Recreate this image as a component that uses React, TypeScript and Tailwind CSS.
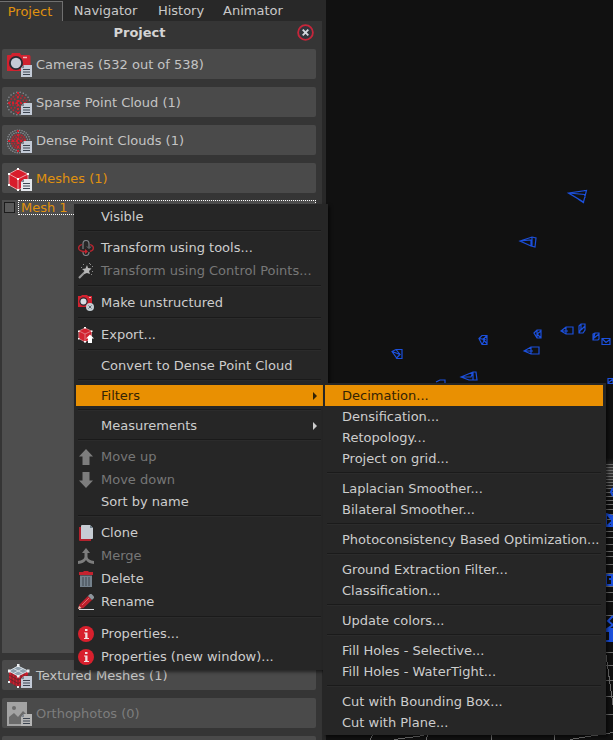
import type { ReactNode } from "react";
import clsx from "clsx";

type MenuEntry = { label: string; icon?: ReactNode; disabled?: boolean; submenu?: MenuEntry[][]; open?: boolean; active?: boolean };

/* Little text page shown over the corner of the project icons */
function PageBadge({ light = "#c3cad6" }: { light?: string }) {
  return (
    <g>
      <path d="M17 12h8v12H14v-9z" fill={light} />
      <path d="M14 15l3-3v3z" fill="#7d8591" />
      <path d="M16 16.500h7M16 19h7M16 21.500h7" stroke="#3c4450" />
    </g>
  );
}

function RowIcon({ children, light }: { children: ReactNode; light?: string }) {
  return (
    <svg viewBox="0 0 25 25" className="size-[25px] shrink-0" aria-hidden="true">
      {children}
      <PageBadge light={light} />
    </svg>
  );
}

function CameraIcon() {
  return (
    <RowIcon>
      <path d="M0 2.500Q0 2 1 2h3l1-2h8l1 2h8q1.500 0 1.500 1.500V18H0z" fill="#d0222f" />
      <path d="M16 4.500h4" stroke="#f0b9bd" strokeWidth="1.500" />
      <circle cx="9" cy="10" r="7" fill="#262a33" />
      <circle cx="9" cy="10" r="5.200" fill="#c3cad6" />
    </RowIcon>
  );
}

function CloudIcon({ dense }: { dense?: boolean }) {
  const step = dense ? 2.4 : 3;
  const dots: ReactNode[] = [];
  for (let r = step; r <= 12; r += step) {
    const count = Math.round((r * 6.3) / (dense ? 2.5 : 3.4));
    for (let i = 0; i < count; i++) {
      const a = (i / count) * Math.PI * 2;
      const outer = r > 9.5;
      dots.push(
        <circle
          key={`${r}-${i}`}
          cx={11.5 + r * Math.cos(a) * 0.95}
          cy={12.5 + r * Math.sin(a) * 0.95}
          r={outer ? 0.75 : 1}
          fill={outer ? "#8f939a" : "#b32833"}
        />
      );
    }
  }
  return (
    <RowIcon>
      {dots}
      <path d="M11 1v22M1 12h20" stroke="#d4202f" strokeWidth="2" strokeDasharray="2 2" />
    </RowIcon>
  );
}

function CubeIcon() {
  return (
    <RowIcon light="#e4e7ec">
      <path d="M11 2l10 5v11l-10 5-9-5V7z" fill="#d81c2c" />
      <path d="M11 2l10 5v11l-10 5-9-5V7zM2 7l9 5 10-5M11 12v11" fill="none" stroke="#e9a3a8" />
      <path d="M10 1h2v2h-2zM1 6h2v2H1zM20 6h2v2h-2zM10 11h2v2h-2zM1 17h2v2H1zM10 22h2v2h-2z" fill="#fff" />
    </RowIcon>
  );
}

function TexturedIcon() {
  return (
    <RowIcon>
      <path d="M2 7l9 5 10-5v11l-10 5-9-5z" fill="#c91f2e" />
      <path d="M11 2l10 5-10 5-9-5z" fill="#8fa0ad" />
      <path d="M5 9v11M8 11v11M11 12v11M14 11v11M17 9v11M2 11l9 5 10-5M2 14.500l9 5 10-5" fill="none" stroke="#5d262b" strokeWidth=".8" />
      <path d="M6.500 4.500l9.500 5M16 4.500l-9.500 5M11 2l10 5-10 5-9-5z" fill="none" stroke="#d7dee4" />
      <path d="M10 0h2.500v3H10zM1 5.500h2.500v3H1zM20 5.500h2.500v3H20zM10 11h2.500v2.500H10zM1 17h2v2H1zM10 22h2v2h-2z" fill="#eceff2" />
    </RowIcon>
  );
}

function PhotoIcon() {
  return (
    <RowIcon light="#b5b5b5">
      <path d="M0 0h20v24H0z" fill="#a3a3a3" />
      <path d="M2 15l5-4 4 4 5-6 4 4v9H2z" fill="#6b6b6b" />
      <circle cx="7" cy="6" r="2" fill="#6b6b6b" />
    </RowIcon>
  );
}

function DemIcon() {
  return (
    <RowIcon light="#b5b5b5">
      <path d="M6 2l4-2h6l4 2v12H6z" fill="#8c8c8c" />
    </RowIcon>
  );
}

function MenuIcon({ children }: { children: ReactNode }) {
  return (
    <svg viewBox="0 0 16 16" className="size-4" aria-hidden="true">
      {children}
    </svg>
  );
}

const rotateIcon = (
  <MenuIcon>
    <path d="M5 9V4q0-3.500 3-3.500T11 4v3.500M5 12q0 3.500 3 3.500t3-3.500" fill="none" stroke="#7d8085" strokeWidth="1.200" />
    <path d="M9 6.500l2 2 2-2" fill="none" stroke="#7d8085" />
    <path d="M4 4.500Q.6 5.500.6 8T5 11.500h4M12 4.500Q15.400 5.500 15.400 8T12 11.300" fill="none" stroke="#b5252f" strokeWidth="1.300" />
    <path d="M7 9l3 2.500L7 14z" fill="#c9232f" />
  </MenuIcon>
);

const wandIcon = (
  <MenuIcon>
    <path d="M1 15l7-7" stroke="#9a9a9a" strokeWidth="2.200" />
    <path d="M9 2l1 3 3.500.5-2.500 2.500 1 3-3-1-3 1 .5-3L4 6l3.500-.5z" fill="#b8b8b8" />
    <path d="M5 1h1v1H5zM12 1h1v1h-1zM14 3h1v1h-1zM14 8h1v1h-1zM11 0h1v1h-1zM3 4h1v1H3zM13 11h1v1h-1z" fill="#8b8b8b" />
  </MenuIcon>
);

const unstructuredIcon = (
  <MenuIcon>
    <path d="M0 1h3l1-1h5l1 1h4v11H0z" fill="#d2222f" />
    <path d="M11 2.500h2" stroke="#efb3b8" />
    <circle cx="5.500" cy="6.500" r="4.200" fill="#282b32" />
    <circle cx="5.500" cy="6.500" r="3" fill="#d7dbe1" />
    <circle cx="12" cy="12" r="4" fill="#c3cdd2" />
    <path d="M10.500 10.500l3 3M13.500 10.500l-3 3" stroke="#59666e" />
  </MenuIcon>
);

const exportIcon = (
  <MenuIcon>
    <path d="M7 1l6.500 3v7.500L7 15 .8 11.500V4z" fill="#d2222f" />
    <path d="M7 1l6.500 3v7.500L7 15 .8 11.500V4zM1 4l6 3 6.500-3M7 7v8" fill="none" stroke="#e69ba0" strokeWidth=".7" />
    <path d="M6 0h2v1.500H6zM0 3.500h1.500V5H0zM0 11h1.500v1.500H0zM6 14h2v1.500H6zM13 3.500h1.500V5H13z" fill="#fff" />
    <path d="M12 7.500l4 4h-2V16h-4v-4.500H8z" fill="#fff" />
  </MenuIcon>
);

const upIcon = (
  <MenuIcon>
    <path d="M8 0l7 7.500h-3.500V16h-7V7.500H1z" fill="#7d7d7d" />
  </MenuIcon>
);

const downIcon = (
  <MenuIcon>
    <path d="M8 16l7-7.500h-3.500V0h-7v8.500H1z" fill="#7d7d7d" />
  </MenuIcon>
);

const cloneIcon = (
  <MenuIcon>
    <path d="M1 2h12v14H2q-1 0-1-1z" fill="#b2222d" />
    <path d="M3 1q0-1 1-1h8l3 3v10q0 1-1 1H3z" fill="#c6ccd3" />
    <path d="M12 0l3 3h-3z" fill="#6e7f8a" />
  </MenuIcon>
);

const mergeIcon = (
  <MenuIcon>
    <path d="M8 0l4 5H9.500v4q.5 3 6.500 4v3q-6-.5-8-4-2 3.500-8 4v-3q6-1 6.500-4V5H4z" fill="#7d7d7d" />
  </MenuIcon>
);

const trashIcon = (
  <MenuIcon>
    <path d="M5.500 0h5v1H15v3H1V1h4.500z" fill="#c3232f" />
    <path d="M2 4.500h12V16H2z" fill="#74818c" />
    <path d="M5 6v9M8 6v9M11 6v9" stroke="#3d454c" />
  </MenuIcon>
);

const pencilIcon = (
  <MenuIcon>
    <path d="M1 15.500h15" stroke="#d4d8dc" />
    <path d="M1.500 10.500L10 2l4 4-8.500 8L0 15z" fill="#bd202c" />
    <path d="M10 2l2-2h1.500L16 2.500V4l-2 2z" fill="#8d959c" />
    <path d="M4 11l7-7" stroke="#e26a72" />
    <path d="M1 12l2.500 2L0 15z" fill="#e0c8b8" />
  </MenuIcon>
);

const infoIcon = (
  <MenuIcon>
    <circle cx="8" cy="8" r="8" fill="#d8202d" />
    <path d="M7 3h2.500v2H7zM6 6.500h3.500V12H11v1H6v-1h1.200V7.500H6z" fill="#f1dfe0" />
  </MenuIcon>
);

const filters: MenuEntry[][] = [
  [{ label: "Decimation...", active: true }, { label: "Densification..." }, { label: "Retopology..." }, { label: "Project on grid..." }],
  [{ label: "Laplacian Smoother..." }, { label: "Bilateral Smoother..." }],
  [{ label: "Photoconsistency Based Optimization..." }],
  [{ label: "Ground Extraction Filter..." }, { label: "Classification..." }],
  [{ label: "Update colors..." }],
  [{ label: "Fill Holes - Selective..." }, { label: "Fill Holes - WaterTight..." }],
  [{ label: "Cut with Bounding Box..." }, { label: "Cut with Plane..." }],
];

const meshMenu: MenuEntry[][] = [
  [{ label: "Visible" }],
  [
    { label: "Transform using tools...", icon: rotateIcon },
    { label: "Transform using Control Points...", icon: wandIcon, disabled: true },
  ],
  [{ label: "Make unstructured", icon: unstructuredIcon }],
  [{ label: "Export...", icon: exportIcon }],
  [{ label: "Convert to Dense Point Cloud" }],
  [{ label: "Filters", submenu: filters, open: true, active: true }],
  [{ label: "Measurements", submenu: [] }],
  [
    { label: "Move up", icon: upIcon, disabled: true },
    { label: "Move down", icon: downIcon, disabled: true },
    { label: "Sort by name" },
  ],
  [
    { label: "Clone", icon: cloneIcon },
    { label: "Merge", icon: mergeIcon, disabled: true },
    { label: "Delete", icon: trashIcon },
    { label: "Rename", icon: pencilIcon },
  ],
  [
    { label: "Properties...", icon: infoIcon },
    { label: "Properties (new window)...", icon: infoIcon },
  ],
];

function Menu({ groups, nested, className }: { groups: MenuEntry[][]; nested?: boolean; className: string }) {
  return (
    <div role="menu" className={clsx("absolute z-10 bg-[#262626] shadow-[2px_2px_3px_rgba(0,0,0,0.5)]", className)}>
      {groups.map((group, i) => (
        <div key={i}>
          {i > 0 && (
            <div role="separator" className="h-[9px] px-0.5 pt-[3px]">
              <div className="h-0.5 border-t border-[#1a1a1a] bg-[#2b2b2b]" />
            </div>
          )}
          {group.map((entry) => (
            <div key={entry.label} className="relative">
              <button
                type="button"
                role="menuitem"
                disabled={entry.disabled}
                className={clsx(
                  "flex w-full items-center whitespace-nowrap text-left",
                  entry.icon ? "h-[23px]" : "h-[21px]",
                  nested ? "pl-[17px]" : "pl-0.5",
                  entry.active ? "bg-[#e99002] text-[#332305]" : entry.disabled ? "text-[#777]" : "text-[#cdcdcd]"
                )}
              >
                {!nested && <span className="w-[23px] shrink-0">{entry.icon}</span>}
                {entry.label}
                {entry.submenu && (
                  <svg viewBox="0 0 4 8" className="mr-1.5 ml-auto h-2 w-1" aria-hidden="true">
                    <path d="M0 0l4 4-4 4z" fill="currentColor" />
                  </svg>
                )}
              </button>
              {entry.open && entry.submenu && (
                <Menu groups={entry.submenu} nested className="-top-0.5 left-full w-[283px] py-0.5 pr-[3px] pl-0.5" />
              )}
            </div>
          ))}
        </div>
      ))}
    </div>
  );
}

type RowProps = { icon: ReactNode; label?: string; name?: string; tone?: string };

function ProjectRow({ icon, label, name, tone = "text-[#c4c4c4]" }: RowProps) {
  return (
    <button
      type="button"
      aria-label={name}
      className={clsx("flex h-[30px] w-full shrink-0 items-center gap-1 rounded-xs bg-[#4a4a4a] pt-0.5 pl-[5px] text-left", tone)}
    >
      {icon}
      {label}
    </button>
  );
}

const gridRows = [
  464, 467, 470, 473, 476, 479, 482, 485, 488, 492, 496, 500, 504, 509, 514, 519, 525, 531, 537, 544, 551, 556, 564, 573,
  586, 592, 601, 615, 629, 640, 652, 665, 680, 696, 714,
];

function Viewport() {
  return (
    <main className="min-w-0 flex-1 overflow-hidden bg-[#111]">
      <svg viewBox="0 0 287 740" preserveAspectRatio="xMinYMin slice" className="h-full w-full" aria-hidden="true">
        <defs>
          <linearGradient id="haze" x1="0" y1="0" x2="0" y2="1">
            <stop offset="0" stopColor="#555" stopOpacity="0" />
            <stop offset=".3" stopColor="#555" stopOpacity=".6" />
            <stop offset="1" stopColor="#555" stopOpacity="0" />
          </linearGradient>
        </defs>
        <rect x="279" y="458" width="8" height="40" fill="url(#haze)" />
        {/* ground grid */}
        <g stroke="#6d6d6d" shapeRendering="crispEdges">
          {gridRows.map((y) => (
            <path key={y} d={`M279 ${y + 0.5}h8`} />
          ))}
          <path d="M280 655l7 50M68 739.500l30-4M244 739.500l43-7M44 740l3-6M100 740l2-6M165.500 740v-6M228.500 740v-6" />
        </g>
        {/* camera frusta */}
        <g fill="none" stroke="#1c50dc" strokeWidth="1.200">
          <path d="M242.500 193l18-2.500-3 11.500zM242.500 193l16 1.500 1 3M258 190.500h3M252 199l6 4" />
          <path d="M194 241l12-4 4 1-1 9-4-1zM194 241l11-1v6M206 237v9" />
          <path d="M66 351.500l4-2h6v9h-5zM66 351.500l8 3-4 4M70 349.500l4 5" />
          <path d="M153 338.500l3-3h5v9h-5zM153 338.500l6 1-3 5M161 335.500l-4 4 4 4" />
          <path d="M208 333l3-3h4v8h-4zM211 330v8M215 331l-4 3 4 4" />
          <path d="M235 331l5-4h7v7h-7zM240 327v7M235 331h7" />
          <path d="M253 326l2-2h4v6l-2 3h-4zM255 324v5l-2 4M259 326l-4 4" />
          <path d="M267 334l2-1h4v6l-1 1h-5zM269 333l-2 7M273 334l-5 4" />
          <path d="M276 338.500h8v6h-8zM276 338.500l4 4 4-3" />
          <path d="M198 351l7-4h8v7h-8zM205 347v7M198 351h9" />
          <path d="M135 377l12-5h3l1 8h-8zM135 377h10l2-5v8" />
          <path d="M110 382l4-2h5v4M282 378.500h5v5h-5zM282 383l5-4" />
          <path
            d="M287 488l-2 4 2 4M280 514l6 2v10h-6zM281 514l6 7-6 5M280 575h6v10h-6zM283 579h4M287 616l-5 5 5 4-6 4h6M280 631h6v10h-6M284 631v9"
            strokeWidth="2"
          />
        </g>
      </svg>
    </main>
  );
}

const tabs = [
  { label: "Project", className: "w-[63px] border-t border-r border-[#707070] bg-[#353535] pr-0.5 text-[#e0920f]" },
  { label: "Navigator", className: "w-[85px] text-[#c8c8c8]" },
  { label: "History", className: "w-[66px] text-[#c8c8c8]" },
  { label: "Animator", className: "w-[78px] text-[#c8c8c8]" },
];

export default function App() {
  return (
    <div className="relative flex h-screen overflow-hidden bg-[#282828] font-['DejaVu_Sans',sans-serif] text-[13px] leading-5">
      <aside className="flex w-[326px] shrink-0 flex-col pr-1">
        <nav role="tablist" className="flex h-[21px] shrink-0 pt-px">
          {tabs.map((tab, i) => (
            <button key={tab.label} type="button" role="tab" aria-selected={i === 0} className={tab.className}>
              {tab.label}
            </button>
          ))}
        </nav>

        <div className="flex min-h-0 flex-1 flex-col bg-[#353535] pr-1.5 pl-0.5">
          <header className="flex h-[28px] shrink-0 items-start pt-0.5">
            <h1 className="flex-1 pr-5 text-center font-bold text-[#d4d4d4]">Project</h1>
            <button type="button" aria-label="Close panel" className="mt-px mr-0.5">
              <svg viewBox="0 0 17 17" className="size-[17px]" aria-hidden="true">
                <circle cx="8.500" cy="8.500" r="7.400" fill="#30343b" stroke="#c5263a" strokeWidth="1.800" />
                <path d="M5.700 5.700l5.600 5.600M11.300 5.700l-5.600 5.600" stroke="#d2d6dd" strokeWidth="1.900" />
              </svg>
            </button>
          </header>

          <div className="flex shrink-0 flex-col gap-2">
            <ProjectRow icon={<CameraIcon />} label="Cameras (532 out of 538)" />
            <ProjectRow icon={<CloudIcon />} label="Sparse Point Cloud (1)" />
            <ProjectRow icon={<CloudIcon dense />} label="Dense Point Clouds (1)" />
            <ProjectRow icon={<CubeIcon />} label="Meshes (1)" tone="text-[#e0920f]" />
          </div>

          <div className="my-[7px] flex-1 bg-[#4e4e4e]">
            <div className="flex h-[15px] items-center gap-[3px] pl-0.5">
              <input id="mesh-1" type="checkbox" className="size-[11px] shrink-0 appearance-none border border-[#1c1c1c] bg-[#5a5a5a]" />
              <label htmlFor="mesh-1" className="h-[15px] flex-1 border border-dotted border-white pl-0.5 leading-[13px] text-[#e0920f]">
                Mesh 1
              </label>
            </div>
          </div>

          {/* lower sections run past the bottom of the panel */}
          <div className="flex h-20 shrink-0 flex-col gap-2 overflow-hidden">
            <ProjectRow icon={<TexturedIcon />} label="Textured Meshes (1)" />
            <ProjectRow icon={<PhotoIcon />} label="Orthophotos (0)" tone="text-[#7d7d7d]" />
            <ProjectRow icon={<DemIcon />} name="Elevation models" />
          </div>
        </div>
      </aside>

      <Viewport />

      <Menu groups={meshMenu} className="top-[204px] left-[74px] w-[254px] py-0.5 pr-[5px] pl-0.5" />
    </div>
  );
}
